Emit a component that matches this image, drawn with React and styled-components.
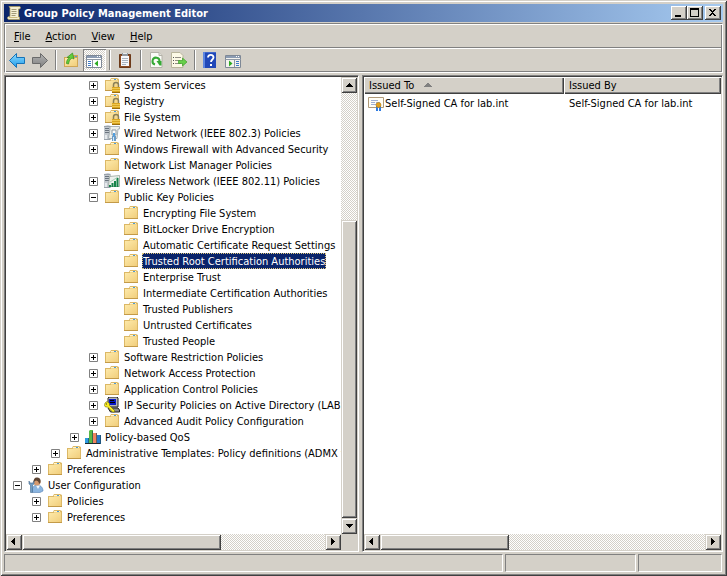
import React from "react";
import styled, { createGlobalStyle, css } from "styled-components";

const FACE = "#d4d0c8";
const SHADOW = "#808080";
const DARK = "#404040";
const NAVY = "#0a246a";

const Global = createGlobalStyle`
  * { box-sizing: border-box; }
  body {
    margin: 0;
    background: ${FACE};
    color: #000;
    font: 11px/16px "DejaVu Sans Condensed", "DejaVu Sans", sans-serif;
  }
  button {
    font: inherit;
    color: inherit;
    margin: 0;
    padding: 0;
    border: 0;
    border-radius: 0;
    background: ${FACE};
  }
`;

const raised = css`
  background: ${FACE};
  box-shadow: inset 1px 1px ${FACE}, inset -1px -1px ${DARK},
    inset 2px 2px #fff, inset -2px -2px ${SHADOW};
`;

const Window = styled.main`
  display: flex;
  flex-direction: column;
  height: 100vh;
  background: ${FACE};
  padding: 4px;
  box-shadow: inset 1px 1px ${FACE}, inset -1px -1px ${DARK},
    inset 2px 2px #fff, inset -2px -2px ${SHADOW};
`;

const TitleBar = styled.header`
  display: flex;
  align-items: center;
  height: 18px;
  padding: 0 2px;
  margin-bottom: 1px;
  background: linear-gradient(to right, ${NAVY}, #a6caf0);
`;

const Title = styled.h1`
  flex: 1;
  margin: 0 0 0 2px;
  padding-top: 1px;
  color: #fff;
  font-size: 11px;
  line-height: 18px;
  font-weight: bold;
  white-space: nowrap;
`;

const CaptionButton = styled.button`
  display: flex;
  width: 16px;
  height: 14px;
  margin-left: ${(p) => (p.$apart ? "2px" : "0")};
  box-shadow: inset -1px -1px ${DARK}, inset 1px 1px #fff,
    inset -2px -2px ${SHADOW};
`;

const Bands = styled.div`
  margin-bottom: 2px;
  border: 1px solid ${SHADOW};
  border-right-color: #fff;
  border-bottom-color: #fff;
  box-shadow: inset 1px 1px #fff, inset -1px -1px ${SHADOW};
  padding: 1px;
`;

const MenuBar = styled.nav`
  display: flex;
  height: 22px;
  padding-left: 1px;
`;

const MenuItem = styled.button`
  padding: 1px 8px 0 7px;
  line-height: 22px;

  &::first-letter {
    text-decoration: underline;
  }
`;

const ToolBar = styled.div`
  display: flex;
  height: 24px;
  padding-top: 1px;
  border-top: 1px solid ${SHADOW};
  box-shadow: inset 0 1px #fff;
`;

const checker = css`
  background: repeating-conic-gradient(#fff 0 25%, ${FACE} 0 50%) 0 0 / 2px 2px;
`;

const ToolButton = styled.button`
  width: 23px;
  height: 22px;
  padding: 3px;
  ${(p) =>
    p.$on &&
    css`
      ${checker}
      box-shadow: inset 1px 1px ${SHADOW}, inset -1px -1px #fff;
    `}
`;

const Divider = styled.span`
  width: 2px;
  margin: 1px 3px;
  background: linear-gradient(to right, ${SHADOW} 50%, #fff 50%);
`;

const Panes = styled.div`
  flex: 1;
  min-height: 0;
  display: grid;
  grid-template-columns: 355fr 361fr;
  gap: 3px;
`;

const Pane = styled.section`
  display: grid;
  grid-template-columns: minmax(0, 1fr) auto;
  grid-template-rows: minmax(0, 1fr) 16px;
  min-width: 0;
  min-height: 0;
  background: #fff;
  border: 1px solid;
  border-color: ${SHADOW} #fff #fff ${SHADOW};
  padding: 1px;
  box-shadow: inset 1px 1px ${DARK}, inset -1px -1px ${FACE};
`;

const Tree = styled.div`
  overflow: hidden;
`;

const Node = styled.div`
  display: flex;
  align-items: center;
  height: 16px;
  padding-left: ${(p) => 2 + p.$level * 19}px;
  white-space: nowrap;
`;

const Twisty = styled.span`
  display: flex;
  flex: none;
  justify-content: center;
  width: 19px;
  margin-right: 1px;
`;

const Expander = styled.button`
  display: flex;
  width: 9px;
  height: 9px;
  background: #fff;
`;

const Label = styled.span`
  height: 16px;
  margin-left: ${(p) => (p.$flush ? "0" : "3px")};
  padding: 1px 1px 0;
  line-height: 16px;
  ${(p) =>
    p.$selected &&
    css`
      background: ${NAVY};
      color: #fff;
      outline: 1px dotted #e0c878;
      outline-offset: -1px;
    `}
`;

const ScrollBar = styled.div`
  display: flex;
  flex-direction: ${(p) => (p.$vertical ? "column" : "row")};
  ${(p) => (p.$vertical ? "width: 16px;" : "height: 16px; grid-row: 2;")}
  ${checker}
`;

const ArrowButton = styled.button`
  ${raised}
  display: flex;
  flex: none;
  width: 16px;
  height: 16px;
`;

const Thumb = styled.div`
  ${raised}
  flex: ${(p) => p.$size};
`;

const Track = styled.div`
  flex: ${(p) => p.$size};
`;

const Corner = styled.div`
  background: ${FACE};
`;

const ListArea = styled.div`
  grid-column: 1 / -1;
  overflow: hidden;
`;

const WideScroll = styled(ScrollBar)`
  grid-column: 1 / -1;
`;

const List = styled.table`
  width: 100%;
  table-layout: fixed;
  border-collapse: separate;
  border-spacing: 0;
`;

const FirstCol = styled.col`
  width: 200px;
`;

const Head = styled.th`
  height: 17px;
  padding: 1px 5px 0;
  background: ${FACE};
  box-shadow: inset 1px 1px #fff, inset -1px -1px ${DARK},
    inset -2px -2px ${SHADOW};
  font-weight: normal;
  line-height: 16px;
  text-align: left;
`;

const SortMark = styled.svg`
  margin-left: 10px;
  vertical-align: 2px;
`;

const Cell = styled.td`
  padding: 1px 4px;
  height: 18px;
  white-space: nowrap;
`;

const IconText = styled.span`
  display: flex;
  align-items: center;
`;

const StatusBar = styled.footer`
  display: flex;
  gap: 2px;
  margin-top: 2px;
  padding-right: 1px;
`;

const StatusCell = styled.div`
  height: 18px;
  flex: ${(p) => p.$flex};
  border: 1px solid;
  border-color: ${SHADOW} #fff #fff ${SHADOW};
`;

const Svg = styled.svg`
  display: block;
  flex: none;
`;

const Icon = ({ children }) => (
  <Svg width="16" height="16" viewBox="0 0 16 16" aria-hidden="true">
    {children}
  </Svg>
);

const FolderShape = () => (
  <>
    <path d="M1 3h5l1-2h6l2 1v12h-14z" fill="#dcb866" />
    <path d="M2 4h12v9h-12z" fill="url(#folderFill)" />
    <path d="M7 2h6v1h-6z" fill="#fff4cc" />
    <path d="M10 2h2v1h-2z" fill="#4a9ad8" />
    <path d="M7 3h7v1h-7z" fill="#f3d68a" />
    <path d="M1 13.500h14" stroke="#c39a48" />
  </>
);

const LockShape = () => (
  <>
    <path d="M9.500 10.500v-2.500a2.500 2.500 0 0 1 5 0v2.500" fill="none" stroke="#8a8058" strokeWidth="1.500" />
    <path d="M8 10h8v6h-8z" fill="#d9a520" />
    <path d="M8 11.500h8M8 13.500h8" stroke="#efc84f" />
    <path d="M8 15.500h8" stroke="#9a6f10" />
  </>
);

const ServerShape = () => (
  <>
    <path d="M0 1l4-1 3 1v14h-7z" fill="#c3c9cf" />
    <path d="M0 1.500h6M0 14.500h6" stroke="#9aa2aa" />
    <path d="M1 3.500h4M1 5.500h4M1 7.500h4" stroke="#6a747e" />
    <path d="M1 10h2v4h-2z" fill="#e6eaed" />
  </>
);

const glyphs = {
  folder: <FolderShape />,
  locked: (
    <>
      <FolderShape />
      <LockShape />
    </>
  ),
  wired: (
    <>
      <ServerShape />
      <path d="M6 1.500h9.500v2.500h-1.500l-1 9.500h-8.500l1.500-9.500z" fill="#eef0ec" stroke="#98a2a8" strokeWidth=".8" />
      <path d="M8 5h4v5h-4z" fill="#fff" stroke="#8d99a2" />
      <path d="M9 8h2v4h-2z" fill="#4f9fe0" />
      <path d="M8 11h4v5h-4z" fill="#6b9cc8" />
      <path d="M9 12h1v4h-1z" fill="#d7ecfb" />
    </>
  ),
  wireless: (
    <>
      <ServerShape />
      <path d="M5.500 3.500l10-1v11h-11z" fill="#edf1ed" stroke="#98a59c" strokeWidth=".8" />
      <path d="M5 12h2v2h-2zM7.500 10h2v4h-2zM10 8h2v6h-2zM12.500 5h2v9h-2z" fill="#15834a" />
      <path d="M6 9l8-5" stroke="#a9cdb7" />
    </>
  ),
  ipsec: (
    <>
      <path d="M4 1l1-1h8l1 1v9h-10z" fill="#b5b5b5" stroke="#222" />
      <path d="M5 2h7v6h-7z" fill="#0818c8" />
      <path d="M6 3h4v1h-4zM6 5h5v1h-5z" fill="#000" />
      <path d="M4 11h10l1.500 2v2h-9z" fill="#8d8d8d" stroke="#222" />
      <path d="M1 6l2-1.500 2.500 2v2l5 5v1.500h-2l-5-5h-2l-1-1.500z" fill="#f8ec20" stroke="#6c6500" strokeWidth=".6" />
      <path d="M2 6.500h1v1h-1z" fill="#333" />
    </>
  ),
  qos: (
    <>
      <path d="M0 9h4v5h-4z" fill="#2f9de0" />
      <path d="M4 2l1-1h3v13h-4z" fill="#58b947" />
      <path d="M8 4h4v10h-4z" fill="#ef8360" />
      <path d="M12 6h4v9h-4z" fill="#2678c8" />
      <path d="M3.500 9v5M7.500 2v12M11.500 4v11M15.500 6v9" stroke="#173e4b" strokeWidth=".6" />
      <path d="M0 14.500h15" stroke="#1a2a30" />
    </>
  ),
  user: (
    <>
      <path d="M4 15c0-5 2-7 5-7s6 2 6 6l-3 1.500h-7z" fill="#8bb5e0" stroke="#5583b5" strokeWidth=".6" />
      <path d="M8 8.500l2 3.500 2-3.500z" fill="#f4f8fc" />
      <circle cx="9" cy="5" r="3.500" fill="#d69a6e" />
      <path d="M5.500 5c0-3 1.500-5 4-4.500s3.500 2 3 5l-1.500 1.500c0-3-2-3-3-3.500z" fill="#5d4433" />
      <path d="M1 4v3l1.500 1v7.500h2v-7.500l1.500-1v-3l-1 2h-3z" fill="#6f9cc6" stroke="#486b8d" strokeWidth=".6" />
    </>
  ),
  back: (
    <path d="M.5 8.500l7-7v4h8v6h-8v4z" fill="url(#backFill)" stroke="#1673b8" strokeLinejoin="round" />
  ),
  forward: (
    <path d="M15.500 8.500l-7-7v4h-8v6h8v4z" fill="url(#forwardFill)" stroke="#6a6a6a" strokeLinejoin="round" />
  ),
  up: (
    <>
      <path d="M1 5h6l1-2h7v12h-14z" fill="#cfa656" />
      <path d="M2 6h12v8h-12z" fill="url(#folderFill)" />
      <path d="M12 4h2v1h-2z" fill="#4a9ad8" />
      <path d="M3.500 11.500c0-3 1-4.500 3-6h-2.500l5.500-4.500 1.500 6-2-1c-2 1-3 3-3.500 6z" fill="#63cf3c" stroke="#338c1f" strokeWidth=".7" />
    </>
  ),
  treePane: (
    <>
      <path d="M.5 3.500h15v12h-15z" fill="#fff" stroke="#7e8896" />
      <path d="M1 4h14v2h-14z" fill="#8b9bb2" />
      <path d="M11 4h1v1h-1zM13 4h1v1h-1z" fill="#fff" />
      <path d="M0 7.500h16M6.500 8v7" stroke="#8e98a5" />
      <path d="M2 9.500h3M2 11.500h3M2 13.500h3" stroke="#3d7ac6" />
      <path d="M12 8.500v6l-3.500-3z" fill="#2daa22" />
    </>
  ),
  clipboard: (
    <>
      <path d="M2.500 2.500h11v13h-11z" fill="#8a4a22" stroke="#6c3a1a" />
      <path d="M4 4h8v10h-8z" fill="#f7f8fa" />
      <path d="M5 1h6v3h-6z" fill="#92999f" />
      <path d="M6 1h4v1h-4z" fill="#e8ebed" />
      <path d="M5 6.500h6M5 8.500h6M5 10.500h6M5 12.500h4" stroke="#a9b4c0" />
    </>
  ),
  refresh: (
    <>
      <path d="M2.500.5h8.500l3 3v12h-11.500z" fill="#fbfbf7" stroke="#b4b2a8" />
      <path d="M11 .5v3h3" fill="#e2e2dc" stroke="#b4b2a8" />
      <path d="M7 12.500a3.500 3.500 0 1 1 4.500-3" fill="none" stroke="#35a935" strokeWidth="2" />
      <path d="M8.500 9h5v4.500h-2z" fill="#35a935" />
    </>
  ),
  exportList: (
    <>
      <path d="M.5 .5h8.500l3 3v12h-11.500z" fill="#fcf9e6" stroke="#b9b59c" />
      <path d="M2 5.500h1M2 8.500h1M2 11.500h1" stroke="#555" />
      <path d="M4 5.500h6M4 8.500h5M4 11.500h6" stroke="#938f86" />
      <path d="M7.500 8.500h4v-2.500l4.500 4-4.500 4v-2.500h-4z" fill="#67cf4a" stroke="#3d9f2a" strokeWidth=".7" />
    </>
  ),
  help: (
    <>
      <path d="M1 0h13v16h-13z" fill="#2148b8" />
      <path d="M1 0h2v16h-2z" fill="#5d86e0" />
      <path d="M3 0h11v1h-11z" fill="#4068cc" />
      <path d="M6 5.500c0-3.500 5.500-3.500 5.500 0 0 2-2.500 2-2.500 4.500" fill="none" stroke="#fff" strokeWidth="1.800" />
      <path d="M8 12h2v2h-2z" fill="#fff" />
    </>
  ),
  actionPane: (
    <>
      <path d="M.5 3.500h15v12h-15z" fill="#f4f3ee" stroke="#7e8896" />
      <path d="M1 4h14v2h-14z" fill="#8b9bb2" />
      <path d="M11 4h1v1h-1zM13 4h1v1h-1z" fill="#fff" />
      <path d="M0 7.500h16M9.500 8v7" stroke="#8e98a5" />
      <path d="M11 9.500h3M11 11.500h3M11 13.500h3" stroke="#3d7ac6" />
      <path d="M4 8.500v6l3.500-3z" fill="#2daa22" />
    </>
  ),
  scroll: (
    <>
      <path d="M3 1.500h10.500c1 0 1.500 2 0 2.500h-1v8h1v2.500h-10.500c-2 0-2-3 0-3h1v-8.500z" fill="#f5efd2" stroke="#a8995f" strokeWidth=".8" />
      <path d="M5.500 4.500h5M5.500 6.500h5M5.500 8.500h5M5.500 10.500h4" stroke="#a39a78" />
      <path d="M3 12.500h8.500" stroke="#cdbc7c" />
    </>
  ),
  certificate: (
    <>
      <path d="M.5 2.500h15v10h-15z" fill="#fffdf5" stroke="#b09a78" />
      <path d="M3 5.500h7M3 7.500h4M8 7.500h4M3 9.500h5" stroke="#9fb0d4" />
      <path d="M8 11h2v5h-2zM11 11h2v5h-2z" fill="#2f7be0" />
      <circle cx="10.500" cy="10" r="2.500" fill="#e0a020" stroke="#b77c10" strokeWidth=".6" />
    </>
  ),
};

const Gradients = () => (
  <Svg width="0" height="0" aria-hidden="true">
    <defs>
      <linearGradient id="folderFill" x1="0" y1="0" x2="1" y2="1">
        <stop offset="0" stopColor="#fde9a9" />
        <stop offset="1" stopColor="#f1ce7c" />
      </linearGradient>
      <linearGradient id="backFill" x1="0" y1="0" x2="0" y2="1">
        <stop offset="0" stopColor="#8fdcff" />
        <stop offset="1" stopColor="#1e9bea" />
      </linearGradient>
      <linearGradient id="forwardFill" x1="0" y1="0" x2="0" y2="1">
        <stop offset="0" stopColor="#b4b4b4" />
        <stop offset="1" stopColor="#7f7f7f" />
      </linearGradient>
    </defs>
  </Svg>
);

const arrowPaths = {
  up: "M8 6h1v1h1v1h1v1h1v1h-7v-1h1v-1h1v-1h1z",
  down: "M5 6h7v1h-1v1h-1v1h-1v1h-1v-1h-1v-1h-1v-1h-1z",
  left: "M9 4v7h-1v-1h-1v-1h-1v-1h-1v-1h1v-1h1v-1h1v-1z",
  right: "M6 4v7h1v-1h1v-1h1v-1h1v-1h-1v-1h-1v-1h-1v-1z",
};

const Arrow = ({ dir }) => (
  <ArrowButton aria-label={`Scroll ${dir}`}>
    <Icon>
      <path d={arrowPaths[dir]} />
    </Icon>
  </ArrowButton>
);

const captionPaths = {
  Minimize: "M4 9h6v2h-6z",
  Maximize: "M3 2h9v9h-9zM4 4v6h7v-6z",
  Close: "M4 3h2v1h1v1h1v-1h1v-1h2v1h-1v1h-1v1h-1v1h1v1h1v1h1v1h-2v-1h-1v-1h-1v1h-1v1h-2v-1h1v-1h1v-1h1v-1h-1v-1h-1v-1h-1z",
};

const nodes = [
  [4, "+", "locked", "System Services"],
  [4, "+", "locked", "Registry"],
  [4, "+", "locked", "File System"],
  [4, "+", "wired", "Wired Network (IEEE 802.3) Policies"],
  [4, "+", "folder", "Windows Firewall with Advanced Security"],
  [4, "", "folder", "Network List Manager Policies"],
  [4, "+", "wireless", "Wireless Network (IEEE 802.11) Policies"],
  [4, "-", "folder", "Public Key Policies"],
  [5, "", "folder", "Encrypting File System"],
  [5, "", "folder", "BitLocker Drive Encryption"],
  [5, "", "folder", "Automatic Certificate Request Settings"],
  [5, "", "folder", "Trusted Root Certification Authorities", true],
  [5, "", "folder", "Enterprise Trust"],
  [5, "", "folder", "Intermediate Certification Authorities"],
  [5, "", "folder", "Trusted Publishers"],
  [5, "", "folder", "Untrusted Certificates"],
  [5, "", "folder", "Trusted People"],
  [4, "+", "folder", "Software Restriction Policies"],
  [4, "+", "folder", "Network Access Protection"],
  [4, "+", "folder", "Application Control Policies"],
  [4, "+", "ipsec", "IP Security Policies on Active Directory (LAB.I"],
  [4, "+", "folder", "Advanced Audit Policy Configuration"],
  [3, "+", "qos", "Policy-based QoS"],
  [2, "+", "folder", "Administrative Templates: Policy definitions (ADMX file"],
  [1, "+", "folder", "Preferences"],
  [0, "-", "user", "User Configuration"],
  [1, "+", "folder", "Policies"],
  [1, "+", "folder", "Preferences"],
];

const tools = [
  ["back", "Back"],
  ["forward", "Forward"],
  null,
  ["up", "Up one level"],
  ["treePane", "Show or hide console tree", true],
  null,
  ["clipboard", "Paste"],
  null,
  ["refresh", "Refresh"],
  ["exportList", "Export list"],
  null,
  ["help", "Help"],
  ["actionPane", "Show or hide action pane"],
];

const TreeNode = ({ level, state, icon, text, selected }) => (
  <Node
    role="treeitem"
    $level={level}
    aria-level={level + 1}
    aria-selected={!!selected}
    aria-expanded={state ? state === "-" : undefined}
  >
    <Twisty>
      {state && (
        <Expander aria-label={`${state === "+" ? "Expand" : "Collapse"} ${text}`}>
          <Svg width="9" height="9" viewBox="0 0 9 9" aria-hidden="true">
            <path d="M.5.5h8v8h-8z" fill="#fff" stroke="#808080" />
            <path d={state === "+" ? "M2 4.500h5M4.500 2v5" : "M2 4.500h5"} stroke="#000" />
          </Svg>
        </Expander>
      )}
    </Twisty>
    <Icon>{glyphs[icon]}</Icon>
    <Label $selected={selected}>{text}</Label>
  </Node>
);

export default function App() {
  return (
    <Window>
      <Global />
      <TitleBar>
        <Icon>{glyphs.scroll}</Icon>
        <Title>Group Policy Management Editor</Title>
        {Object.entries(captionPaths).map(([name, d]) => (
          <CaptionButton key={name} aria-label={name} $apart={name === "Close"}>
            <Svg width="16" height="14" viewBox="0 0 16 14" aria-hidden="true">
              <path d={d} fillRule="evenodd" />
            </Svg>
          </CaptionButton>
        ))}
      </TitleBar>
      <Bands>
        <MenuBar>
          {["File", "Action", "View", "Help"].map((m) => (
            <MenuItem key={m}>{m}</MenuItem>
          ))}
        </MenuBar>
        <ToolBar role="toolbar">
          {tools.map((t, i) =>
            t ? (
              <ToolButton key={i} aria-label={t[1]} title={t[1]} $on={t[2]}>
                <Icon>{glyphs[t[0]]}</Icon>
              </ToolButton>
            ) : (
              <Divider key={i} />
            )
          )}
        </ToolBar>
      </Bands>
      <Panes>
        <Pane>
          <Tree role="tree" aria-label="Console tree">
            {nodes.map(([level, state, icon, text, selected], i) => (
              <TreeNode key={i} {...{ level, state, icon, text, selected }} />
            ))}
          </Tree>
          <ScrollBar $vertical>
            <Arrow dir="up" />
            <Track $size={127} />
            <Thumb $size={298} />
            <Arrow dir="down" />
          </ScrollBar>
          <ScrollBar>
            <Arrow dir="left" />
            <Thumb $size={199} />
            <Track $size={104} />
            <Arrow dir="right" />
          </ScrollBar>
          <Corner />
        </Pane>
        <Pane>
          <ListArea>
            <List>
              <colgroup>
                <FirstCol />
                <col />
              </colgroup>
              <thead>
                <tr>
                  <Head aria-sort="ascending">
                    Issued To
                    <SortMark width="8" height="4" viewBox="0 0 8 4" aria-hidden="true">
                      <path d="M3 0h2v1h1v1h1v1h1v1h-8v-1h1v-1h1v-1h1z" fill={SHADOW} />
                    </SortMark>
                  </Head>
                  <Head>Issued By</Head>
                </tr>
              </thead>
              <tbody>
                <tr>
                  <Cell>
                    <IconText>
                      <Icon>{glyphs.certificate}</Icon>
                      <Label $flush>Self-Signed CA for lab.int</Label>
                    </IconText>
                  </Cell>
                  <Cell>
                    <IconText>
                      <Label $flush>Self-Signed CA for lab.int</Label>
                    </IconText>
                  </Cell>
                </tr>
              </tbody>
            </List>
          </ListArea>
          <WideScroll>
            <Arrow dir="left" />
            <Thumb $size={129} />
            <Track $size={196} />
            <Arrow dir="right" />
          </WideScroll>
        </Pane>
      </Panes>
      <StatusBar>
        <StatusCell $flex="1" />
        <StatusCell $flex="0 0 131px" />
        <StatusCell $flex="0 0 84px" />
      </StatusBar>
      <Gradients />
    </Window>
  );
}
